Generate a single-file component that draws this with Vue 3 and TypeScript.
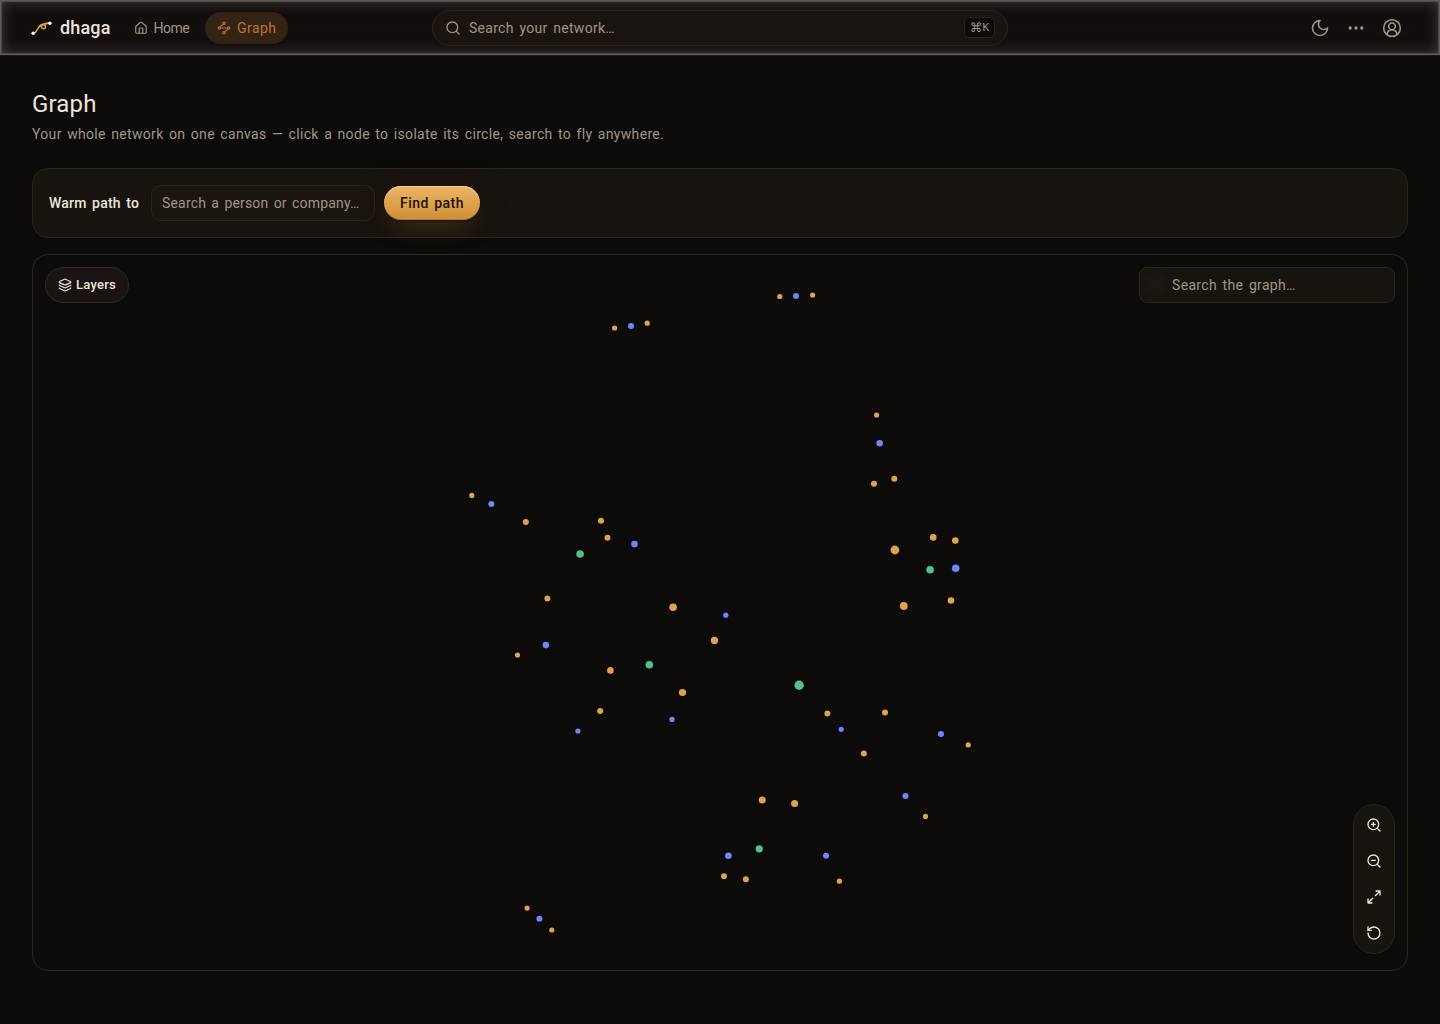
<script setup lang="ts">
type Kind = 'person' | 'company' | 'event'
interface GraphNode { x: number; y: number; r: number; kind: Kind }

const make = (kind: Kind, items: number[][]): GraphNode[] =>
  items.map(([x, y, r]) => ({ x, y, r, kind }))

const nodes: GraphNode[] = [
  ...make('person', [
    [779.8, 296.5, 2.6], [812.6, 295, 2.6], [614.6, 328, 2.6], [647.2, 323.2, 2.6],
    [876.6, 415, 2.6], [874, 483.8, 3], [894.3, 478.8, 3], [471.8, 495.4, 2.6],
    [525.8, 522.1, 3], [601, 520.7, 3], [607.5, 537.8, 3], [547.4, 598.5, 3],
    [673.1, 607.3, 3.8], [714.5, 640.4, 3.6], [517.5, 655, 2.6], [610.4, 670.4, 3.3],
    [682.5, 692.5, 3.6], [600.2, 711.1, 3], [894.9, 550, 4.4], [933.2, 537.4, 3.3],
    [955.3, 540.6, 3.3], [903.8, 606, 3.9], [951, 600.5, 3.3], [827.4, 713.4, 3],
    [885, 712.4, 3], [968.2, 744.9, 2.6], [863.9, 753.4, 3], [925.5, 816.4, 2.6],
    [762.2, 799.9, 3.5], [794.6, 803.4, 3.5], [724, 876.2, 3], [745.9, 879.3, 3],
    [839.4, 881.2, 2.6], [527.1, 908.1, 2.6], [551.8, 930, 2.6],
  ]),
  ...make('company', [
    [796, 296, 3], [631, 325.9, 3], [879.7, 443.3, 3.3], [491.3, 504.1, 3],
    [634.5, 544.1, 3.3], [725.8, 615.2, 2.6], [545.9, 645.1, 3.3], [672, 719.4, 2.6],
    [577.9, 731, 2.6], [955.7, 568.2, 3.8], [841.2, 729.3, 2.6], [941, 734, 3],
    [905.5, 796, 3], [728.4, 855.7, 3.3], [826.1, 855.8, 3], [539.4, 918.8, 3],
  ]),
  ...make('event', [
    [580.1, 554, 3.8], [649.3, 664.8, 3.8], [930.1, 569.8, 3.8], [799.1, 685.3, 4.7],
    [759.2, 848.8, 3.6],
  ]),
]
</script>

<template>
  <div class="page">
    <header class="topbar">
      <div class="left">
        <div class="brand">
          <svg class="mark" width="22" height="16" viewBox="0 0 22 16" fill="none">
            <path d="M2.7 13.3C6 12.6 6.5 7.2 9.8 5C12 3.7 14.8 4.9 14.4 7.2C14 9.4 10.4 9.3 10.3 7C10.2 3.6 15 3.4 19.2 3.1" stroke="#dda04a" stroke-width="1.6" />
            <circle cx="2.2" cy="13.3" r="1.75" fill="#fbf3e4" />
            <circle cx="18.9" cy="3.2" r="1.75" fill="#fbf3e4" />
          </svg>
          <span class="wordmark">dhaga</span>
        </div>
        <nav>
          <a class="link home">
            <svg class="ico" width="14" height="14" viewBox="0 0 24 24"><path d="M15 21v-8a1 1 0 0 0-1-1h-4a1 1 0 0 0-1 1v8" /><path d="M3 10a2 2 0 0 1 .709-1.528l7-5.999a2 2 0 0 1 2.582 0l7 5.999A2 2 0 0 1 21 10v9a2 2 0 0 1-2 2H5a2 2 0 0 1-2-2z" /></svg>
            <span>Home</span>
          </a>
          <a class="link active">
            <svg class="ico" width="14" height="14" viewBox="0 0 24 24"><path d="m10.586 5.414-5.172 5.172" /><path d="m18.586 13.414-5.172 5.172" /><path d="M6 12h12" /><circle cx="12" cy="20" r="2" /><circle cx="12" cy="4" r="2" /><circle cx="20" cy="12" r="2" /><circle cx="4" cy="12" r="2" /></svg>
            <span>Graph</span>
          </a>
        </nav>
      </div>
      <div class="global-search">
        <svg class="ico" width="16" height="16" viewBox="0 0 24 24"><circle cx="11" cy="11" r="8" /><path d="m21 21-4.3-4.3" /></svg>
        <span class="hint">Search your network…</span>
        <kbd><span class="cmd">⌘</span>K</kbd>
      </div>
      <div class="actions">
        <button><svg class="ico" width="20" height="20" viewBox="0 0 24 24"><path d="M12 3a6 6 0 0 0 9 9 9 9 0 1 1-9-9Z" /></svg></button>
        <button><svg class="ico dots" width="20" height="20" viewBox="0 0 24 24"><circle cx="12" cy="12" r="1" /><circle cx="19" cy="12" r="1" /><circle cx="5" cy="12" r="1" /></svg></button>
        <button><svg class="ico" width="20" height="20" viewBox="0 0 24 24"><path d="M18 20a6 6 0 0 0-12 0" /><circle cx="12" cy="10" r="4" /><circle cx="12" cy="12" r="10" /></svg></button>
      </div>
    </header>

    <main>
      <h1>Graph</h1>
      <p class="sub">Your whole network on one canvas — click a node to isolate its circle, search to fly anywhere.</p>

      <section class="warm">
        <span class="label">Warm path to</span>
        <div class="field"><span>Search a person or company…</span></div>
        <button class="find"><span>Find path</span></button>
      </section>

      <section class="canvas">
        <svg class="nodes" width="1374" height="715" viewBox="33 255 1374 715">
          <circle v-for="(n, i) in nodes" :key="i" :cx="n.x" :cy="n.y" :r="n.r" :class="n.kind" />
        </svg>
        <button class="layers">
          <svg class="ico" width="14" height="14" viewBox="0 0 24 24"><path d="M12.83 2.18a2 2 0 0 0-1.66 0L2.6 6.08a1 1 0 0 0 0 1.83l8.58 3.91a2 2 0 0 0 1.66 0l8.58-3.9a1 1 0 0 0 0-1.83z" /><path d="M2 12a1 1 0 0 0 .58.91l8.6 3.91a2 2 0 0 0 1.65 0l8.58-3.9A1 1 0 0 0 22 12" /><path d="M2 17a1 1 0 0 0 .58.91l8.6 3.91a2 2 0 0 0 1.65 0l8.58-3.9A1 1 0 0 0 22 17" /></svg>
          <span>Layers</span>
        </button>
        <div class="graph-search"><span>Search the graph…</span></div>
        <div class="controls">
          <button><svg class="ico" width="16" height="16" viewBox="0 0 24 24"><circle cx="11" cy="11" r="8" /><path d="m21 21-4.35-4.35M11 8v6M8 11h6" /></svg></button>
          <button><svg class="ico" width="16" height="16" viewBox="0 0 24 24"><circle cx="11" cy="11" r="8" /><path d="m21 21-4.35-4.35M8 11h6" /></svg></button>
          <button><svg class="ico" width="16" height="16" viewBox="0 0 24 24"><path d="M15 3h6v6M21 3l-7 7M3 21l7-7M9 21H3v-6" /></svg></button>
          <button><svg class="ico" width="16" height="16" viewBox="0 0 24 24"><path d="M3 12a9 9 0 1 0 9-9 9.75 9.75 0 0 0-6.74 2.74L3 8" /><path d="M3 3v5h5" /></svg></button>
        </div>
      </section>
    </main>
  </div>
</template>

<style>
body { background: #0c0b09; }
</style>

<style scoped>
.page {
  height: 1024px;
  overflow: hidden;
  background: #0c0b09;
  color: #ece5d8;
  font: 14px/20px Roboto, "Liberation Sans", sans-serif;
}
* { box-sizing: border-box; }
button { font: inherit; color: inherit; background: none; border: 0; padding: 0; }
.ico { fill: none; stroke: currentColor; stroke-width: 2; stroke-linecap: round; stroke-linejoin: round; flex: none; display: block; }
span { white-space: nowrap; }

.topbar {
  height: 55px;
  display: grid;
  grid-template-columns: 1fr 576px 1fr;
  align-items: center;
  padding: 0 30px;
  background: #120e0d;
  border: 1px solid #5f595a;
  box-shadow: inset 0 0 1px 1px rgba(110, 101, 103, .6), inset 0 0 14px 1px rgba(110, 96, 100, .5), 0 1px 0 #1d1814;
}
.left { display: flex; align-items: center; }
.brand { display: flex; align-items: center; width: 87px; }
.mark { margin-right: 7px; }
.wordmark { font-size: 18px; line-height: 24px; font-weight: 500; letter-spacing: .15px; color: #ece5d8; }
nav { display: flex; gap: 4px; }
.link { height: 32px; display: flex; align-items: center; gap: 6px; border-radius: 16px; color: #a09582; }
.link.home { width: 83px; padding-left: 16px; gap: 5.5px; letter-spacing: -.5px; }
.link.active { width: 83px; padding-left: 12px; letter-spacing: .45px; background: #332315; color: #c0732c; }
.global-search {
  height: 36px;
  display: flex;
  align-items: center;
  padding: 0 12px;
  border: 1px solid #2b2419;
  border-radius: 18px;
  background: #191410;
  color: #a09582;
}
.hint { margin-left: 8px; flex: 1; word-spacing: 2px; letter-spacing: .28px; }
kbd {
  width: 31px;
  height: 21px;
  display: flex;
  align-items: center;
  justify-content: center;
  border: 1px solid #2b2419;
  border-radius: 5px;
  background: #0c0b09;
  font: 11px/16px "DejaVu Sans Mono", "Liberation Mono", monospace;
}
.cmd { font: 12.5px/16px "DejaVu Sans", sans-serif; }
.actions { display: flex; justify-content: flex-end; margin-right: -1px; color: #a09582; }
.actions button { width: 36px; height: 36px; display: flex; align-items: center; justify-content: center; }
.actions .ico { stroke-width: 1.9; }
.actions .dots { stroke-width: 2; }
.actions .dots circle { fill: currentColor; }

main { padding: 33px 32px 0; }
h1 { margin: 0; font-size: 24px; line-height: 32px; font-weight: 400; letter-spacing: .15px; color: #ece5d8; }
.sub { margin: 4px 0 0; color: #a09582; word-spacing: 1.6px; letter-spacing: .33px; white-space: nowrap; }

.warm {
  margin-top: 24px;
  height: 70px;
  display: flex;
  align-items: center;
  padding-left: 16px;
  border: 1px solid #2b2419;
  border-radius: 16px;
  background: #17130e;
}
.label { width: 102px; font-weight: 500; word-spacing: 1.8px; letter-spacing: .2px; }
.field {
  width: 224px;
  height: 36px;
  display: flex;
  align-items: center;
  padding-left: 10px;
  border: 1px solid #2b2419;
  border-radius: 10px;
  background: #1a1510;
  color: #a09582;
  word-spacing: 1.6px;
  letter-spacing: .18px;
}
.find {
  width: 96px;
  height: 34px;
  margin-left: 9px;
  border-radius: 17px;
  background: linear-gradient(#edb566, #cf8f39);
  box-shadow: inset 0 1px 0 rgba(255, 225, 180, .65), inset 0 -1px 0 rgba(140, 85, 25, .4), 0 1px 2px rgba(0, 0, 0, .5), 0 12px 24px -6px rgba(222, 158, 73, .2), 0 0 22px 4px rgba(32, 21, 14, .35);
  color: #1a1209;
  font-weight: 500;
  letter-spacing: .45px;
  word-spacing: 1.5px;
}

.canvas {
  position: relative;
  margin-top: 16px;
  height: 717px;
  border: 1px solid #2b2419;
  border-radius: 16px;
  overflow: hidden;
}
.nodes { display: block; }
.person { fill: #e2a24b; }
.company { fill: #6a88fb; }
.event { fill: #4dc48c; }
.layers {
  position: absolute;
  left: 12px;
  top: 12px;
  width: 84px;
  height: 36px;
  display: flex;
  align-items: center;
  padding-left: 12px;
  gap: 4px;
  border: 1px solid #302a23;
  border-radius: 18px;
  background: #191411;
  font-size: 13px;
  font-weight: 500;
  letter-spacing: .25px;
}
.graph-search {
  position: absolute;
  right: 12px;
  top: 12px;
  width: 256px;
  height: 36px;
  display: flex;
  align-items: center;
  padding-left: 32px;
  border: 1px solid #2b2419;
  border-radius: 8px;
  background: radial-gradient(circle at 16px 17px, #1c1813 0, #17130e 16px);
  color: #a09582;
  letter-spacing: .33px;
  word-spacing: 1.8px;
}
.controls {
  position: absolute;
  right: 12px;
  bottom: 16px;
  padding: 2px;
  border: 1px solid #2b2419;
  border-radius: 21px;
  background: #17130e;
}
.controls button { width: 36px; height: 36px; display: flex; align-items: center; justify-content: center; }
</style>
